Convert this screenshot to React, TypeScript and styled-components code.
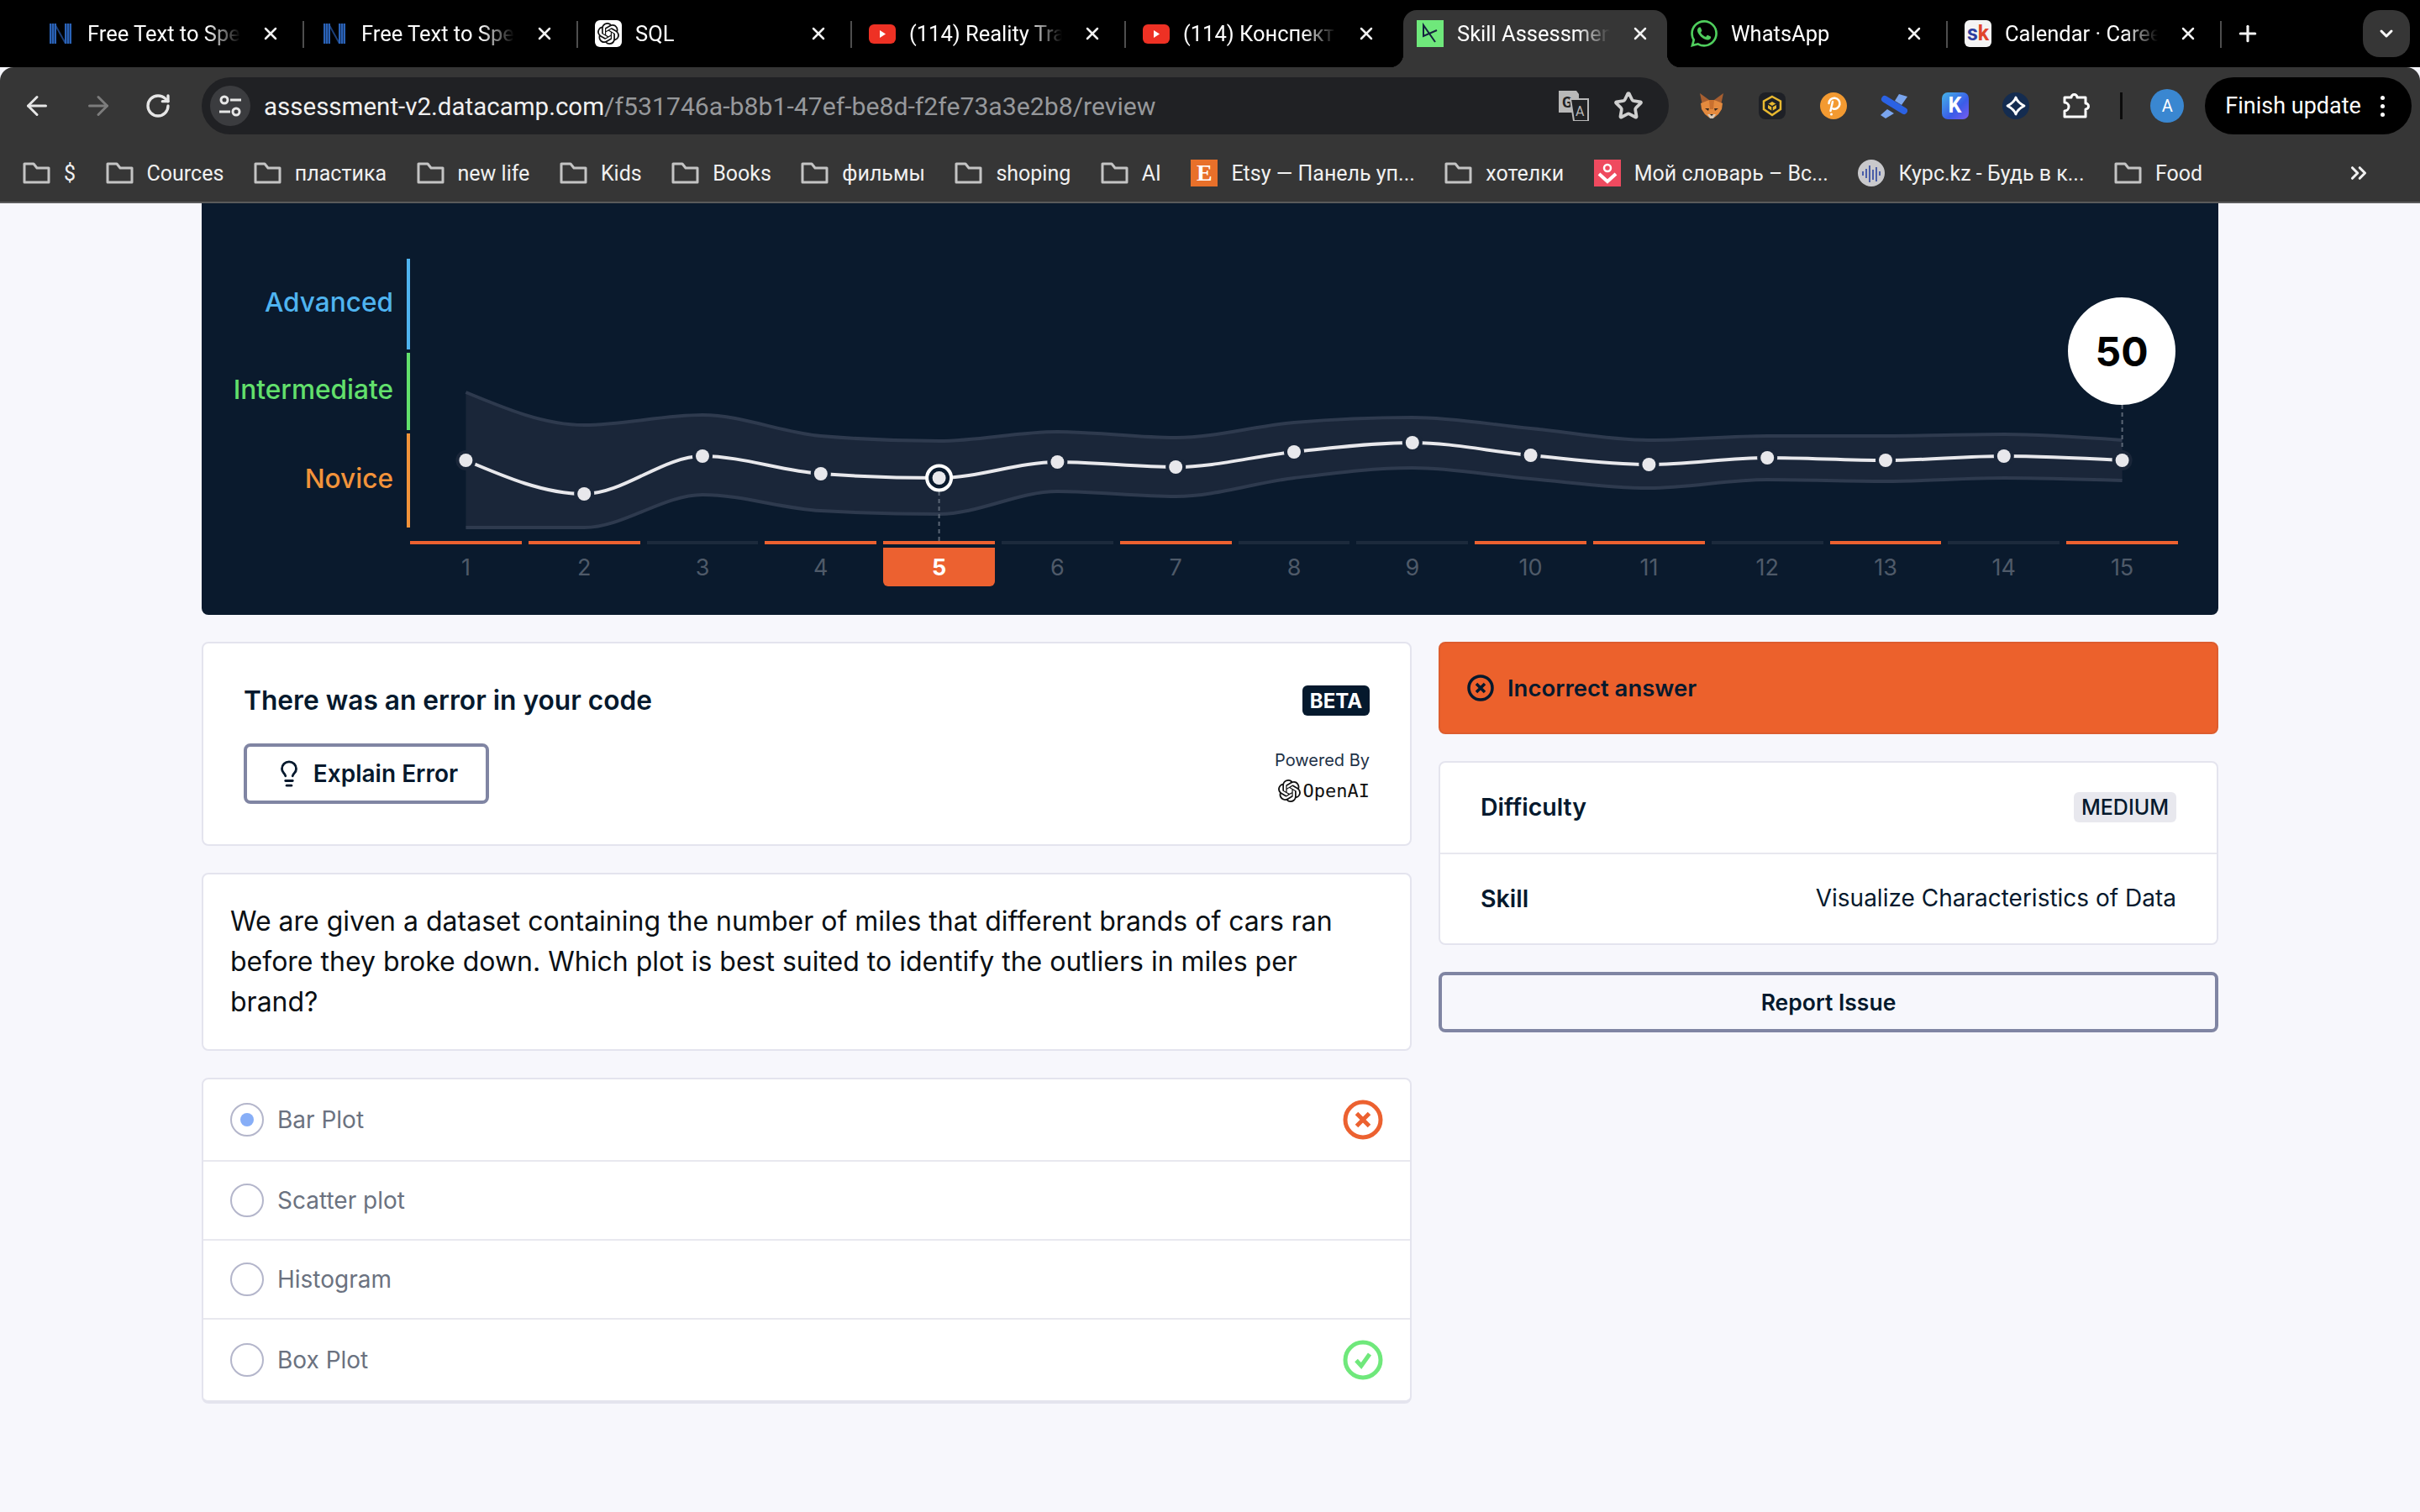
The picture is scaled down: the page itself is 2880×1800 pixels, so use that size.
import React from 'react'
import styled, { createGlobalStyle, css } from 'styled-components'
import { ArrowLeft, ArrowRight, ChevronDown, ChevronsRight, Lightbulb, Plus, RotateCw, Star, X } from 'lucide-react'
import { SiOpenai, SiWhatsapp } from 'react-icons/si'

const UI_FONT = `Roboto, "Liberation Sans", sans-serif`
const PAGE_FONT = `Inter, "Noto Sans", sans-serif`

const GlobalStyle = createGlobalStyle`
    html, body {
        margin: 0;
        padding: 0;
        background: #f7f7fc;
    }
    body {
        width: 2880px;
        height: 1800px;
        overflow: hidden;
        font-family: ${PAGE_FONT};
    }
    * {
        box-sizing: border-box;
    }
`

/* favicons + extension icons */

const NotionN = () => (
    <svg width="32" height="32" viewBox="0 0 32 32">
        <path d="M11 6l10 18v4L11 10z" fill="#1c3f78" />
        <path d="M3 4h8v24H3zM21 4h8v24h-8z" fill="#2a63b8" />
        <path d="M5.500 4v24M8.500 4v24M23.500 4v24M26.500 4v24" stroke="#16315f" strokeWidth="1" />
    </svg>
)

const ChatGptFav = () => (
    <GptBox>
        <SiOpenai size={26} color="#111" />
    </GptBox>
)

const YoutubeFav = () => (
    <svg width="32" height="32" viewBox="0 0 32 32">
        <rect x="0" y="5" width="32" height="23" rx="6" fill="#ee3124" />
        <path d="M13 12l7 4.500-7 4.500z" fill="#fff" />
    </svg>
)

const DatacampFav = () => (
    <svg width="32" height="32" viewBox="0 0 32 32">
        <rect width="32" height="32" fill="#6fe87b" />
        <path d="M22 26L8 6v13l16-7" fill="none" stroke="#14233f" strokeWidth="2" />
    </svg>
)

const WhatsappFav = () => <SiWhatsapp size={32} color="#4fce5d" />

const SkFav = () => (
    <SkBox>
        <SkS>s</SkS>k
    </SkBox>
)

const FolderIcon = () => (
    <svg width="33" height="26" viewBox="0 0 33 26" fill="none" stroke="#c4c4c4" strokeWidth="3">
        <path d="M2 2h11l4 5h14v17H2z" strokeLinejoin="round" />
    </svg>
)

const EtsyIcon = () => <EtsyBox>E</EtsyBox>

const DictIcon = () => (
    <svg width="32" height="32" viewBox="0 0 32 32">
        <rect width="32" height="32" fill="#ef4a5f" />
        <circle cx="16" cy="10" r="4" fill="none" stroke="#fff" strokeWidth="2.500" />
        <path d="M6 17l10 9 10-9" fill="none" stroke="#fff" strokeWidth="4" />
    </svg>
)

const KursIcon = () => (
    <svg width="32" height="32" viewBox="0 0 32 32">
        <circle cx="16" cy="16" r="16" fill="#c9c9cc" />
        <path d="M6 14v5M10 11v11M14 7v20M18 12v12M22 9v17M26 14v5" stroke="#4a5ea8" strokeWidth="2" />
    </svg>
)

const FoxIcon = () => (
    <svg width="32" height="32" viewBox="0 0 32 32">
        <path d="M2 1l11 8-8 6zM30 1L19 9l8 6z" fill="#a85f30" />
        <path d="M3 13l10-4h6l10 4-1 7-4 6-5 4h-6l-5-4-4-6z" fill="#e48a3e" />
        <path d="M13 9h6l-1 11h-4z" fill="#c9702f" />
        <path d="M8 19h5l-1 3zM24 19h-5l1 3z" fill="#3a2a20" />
        <path d="M11 26h10l-3 5h-4z" fill="#d8c7b5" />
        <path d="M14 26h4l-2 2z" fill="#222" />
    </svg>
)

const BeetleIcon = () => (
    <svg width="32" height="32" viewBox="0 0 32 32">
        <rect width="32" height="32" rx="8" fill="#1e2026" />
        <path d="M16 5l10 5.500V20l-10 7-10-7v-9.500z" fill="none" stroke="#e8b830" strokeWidth="2.500" />
        <path d="M16 11l5 3v5l-5 3-5-3v-5z" fill="#e8b830" />
        <path d="M11 14l5 3 5-3M16 17v5" stroke="#1e2026" strokeWidth="1.500" fill="none" />
    </svg>
)

const PolkaIcon = () => (
    <svg width="32" height="32" viewBox="0 0 32 32">
        <circle cx="16" cy="16" r="16" fill="#f39a31" />
        <path d="M10.500 13a6.500 6.500 0 1 1 5 6.500M15 11l-2.500 11" fill="none" stroke="#fff" strokeWidth="2.500" strokeLinecap="round" />
        <circle cx="13.500" cy="26" r="1.500" fill="#fff" />
    </svg>
)

const SatelliteIcon = () => (
    <svg width="32" height="32" viewBox="0 0 32 32">
        <path d="M22 2l10 3-7 10-8-5zM8 20l8 5-10 6-6-4z" fill="#7aa5ee" />
        <path d="M5 8l23 14" stroke="#2b62e3" strokeWidth="8" strokeLinecap="round" />
    </svg>
)

const KeplrIcon = () => <KeplrBox>K</KeplrBox>

const DiamondIcon = () => (
    <svg width="32" height="32" viewBox="0 0 32 32">
        <circle cx="16" cy="16" r="16" fill="#142c50" />
        <path d="M16 6q2 6 10 10q-8 4-10 10q-2-6-10-10q8-4 10-10z" fill="none" stroke="#fff" strokeWidth="2.800" strokeLinejoin="round" />
    </svg>
)

const PuzzleIcon = () => (
    <svg width="32" height="32" viewBox="0 0 32 32" fill="none" stroke="#fff" strokeWidth="3" strokeLinejoin="round">
        <path d="M2 6h8a3.500 3.500 0 0 1 7 0h10v7a3.500 3.500 0 0 1 0 7v9H2v-7a5 5 0 0 0 0-10z" />
    </svg>
)

const TranslateIcon = () => (
    <svg width="36" height="36" viewBox="0 0 36 36">
        <path d="M0 0h21l3 4v22H0z" fill="#b8b8b8" />
        <text x="4" y="20" fontSize="18" fontWeight="700" fontFamily="Roboto, sans-serif" fill="#202124">G</text>
        <path d="M14 10h21v26H18z" fill="#202124" stroke="#b8b8b8" strokeWidth="2" />
        <text x="20" y="30" fontSize="16" fontFamily="Roboto, sans-serif" fill="#b8b8b8">A</text>
    </svg>
)

const SiteInfoIcon = () => (
    <svg width="30" height="30" viewBox="0 0 30 30" fill="none" stroke="#e6e6e6" strokeWidth="3">
        <circle cx="8" cy="8" r="4" />
        <path d="M15 8h13M2 22h13" />
        <circle cx="22" cy="22" r="4" />
    </svg>
)

const StatusIcon = ({ kind }: { kind: 'wrong' | 'right' }) => (
    <svg width="48" height="48" viewBox="0 0 48 48" fill="none" stroke={kind === 'wrong' ? '#ec6130' : '#6fe87b'} strokeWidth="5">
        <circle cx="24" cy="24" r="21" />
        {kind === 'wrong' ? <path d="M16.500 16.500l15 15M31.500 16.500l-15 15" /> : <path d="M16 24.500l6 6.500 10-14" />}
    </svg>
)

const AlertIcon = () => (
    <svg width="32" height="32" viewBox="0 0 32 32" fill="none" stroke="#05192d" strokeWidth="3.500">
        <circle cx="16" cy="16" r="14" />
        <path d="M11 11l10 10M21 11L11 21" />
    </svg>
)

/* chart */

type Pt = [number, number]

const COL = 140.8
const FIRST_X = 66.4
const TOP = 308

const toPts = (ys: number[]): Pt[] => ys.map((y, i) => [FIRST_X + i * COL, y - TOP])

const scores = toPts([548, 588, 543, 564, 569, 550, 556, 538, 527, 542, 553, 545, 548, 543, 548])
const upper = toPts([467, 506, 494, 519, 525, 514, 521, 503, 497, 510, 524, 519, 519, 517, 524])
const lower = toPts([628, 628, 589, 608, 612, 585, 591, 569, 557, 570, 581, 571, 573, 569, 572])

// same maths as d3 curveMonotoneX
const monotone = (pts: Pt[], move = true) => {
    const n = pts.length
    const h: number[] = []
    const s: number[] = []
    for (let i = 0; i < n - 1; i++) {
        h.push(pts[i + 1][0] - pts[i][0])
        s.push((pts[i + 1][1] - pts[i][1]) / h[i])
    }
    const t: number[] = new Array(n).fill(0)
    for (let i = 1; i < n - 1; i++) {
        const p = (s[i - 1] * h[i] + s[i] * h[i - 1]) / (h[i - 1] + h[i])
        t[i] =
            (Math.sign(s[i - 1]) + Math.sign(s[i])) *
            Math.min(Math.abs(s[i - 1]), Math.abs(s[i]), 0.5 * Math.abs(p))
    }
    t[0] = (3 * s[0] - t[1]) / 2
    t[n - 1] = (3 * s[n - 2] - t[n - 2]) / 2
    let d = `${move ? 'M' : 'L'}${pts[0][0]} ${pts[0][1]}`
    for (let i = 0; i < n - 1; i++) {
        const k = h[i] / 3
        d += `C${pts[i][0] + k} ${pts[i][1] + t[i] * k} ${pts[i + 1][0] - k} ${pts[i + 1][1] - t[i + 1] * k} ${pts[i + 1][0]} ${pts[i + 1][1]}`
    }
    return d
}

const ScoreChart = () => (
    <svg width="2104" height="336" viewBox="0 0 2104 336">
        <path d={`${monotone(upper)}${monotone([...lower].reverse(), false)}Z`} fill="#1a2639" />
        <path d={monotone(upper)} fill="none" stroke="#2e3a4e" strokeWidth="4" />
        <path d={monotone(lower)} fill="none" stroke="#2e3a4e" strokeWidth="4" />
        <path d={monotone(scores)} fill="none" stroke="#e8e8ec" strokeWidth="4" />
        <path d={`M${scores[4][0]} 277V336`} stroke="#5b6675" strokeWidth="2" strokeDasharray="5 4" />
        <path d={`M${scores[14][0]} 174V240`} stroke="#5b6675" strokeWidth="2" strokeDasharray="5 4" />
        {scores.map(([x, y], i) => (
            <g key={i}>
                <circle cx={x} cy={y} r="12" fill="#1a2639" />
                {i === 4 && <circle cx={x} cy={y} r="14.500" fill="#0a1a2d" stroke="#fff" strokeWidth="4" />}
                <circle cx={x} cy={y} r="8" fill="#e8e8ec" />
            </g>
        ))}
    </svg>
)

/* data */

const tabs = [
    { icon: <NotionN />, title: 'Free Text to Speech', sep: true },
    { icon: <NotionN />, title: 'Free Text to Speech', sep: true },
    { icon: <ChatGptFav />, title: 'SQL', sep: true },
    { icon: <YoutubeFav />, title: '(114) Reality Transurfing', sep: true },
    { icon: <YoutubeFav />, title: '(114) Конспект книги', sep: false },
    { icon: <DatacampFav />, title: 'Skill Assessment', active: true, sep: false },
    { icon: <WhatsappFav />, title: 'WhatsApp', sep: true },
    { icon: <SkFav />, title: 'Calendar · Career', sep: true },
]

const bookmarks = [
    { icon: <FolderIcon />, label: '$' },
    { icon: <FolderIcon />, label: 'Cources' },
    { icon: <FolderIcon />, label: 'пластика' },
    { icon: <FolderIcon />, label: 'new life' },
    { icon: <FolderIcon />, label: 'Kids' },
    { icon: <FolderIcon />, label: 'Books' },
    { icon: <FolderIcon />, label: 'фильмы' },
    { icon: <FolderIcon />, label: 'shoping' },
    { icon: <FolderIcon />, label: 'AI' },
    { icon: <EtsyIcon />, label: 'Etsy — Панель уп...' },
    { icon: <FolderIcon />, label: 'хотелки' },
    { icon: <DictIcon />, label: 'Мой словарь – Вс...' },
    { icon: <KursIcon />, label: 'Курс.kz - Будь в к...' },
    { icon: <FolderIcon />, label: 'Food' },
]

const extensions = [<FoxIcon />, <BeetleIcon />, <PolkaIcon />, <SatelliteIcon />, <KeplrIcon />, <DiamondIcon />, <PuzzleIcon />]

const levels = [
    { label: 'Advanced', color: '#4fb4f0', height: 108 },
    { label: 'Intermediate', color: '#62e06c', height: 92 },
    { label: 'Novice', color: '#f2933a', height: 112 },
]

const answered = [true, true, false, true, true, false, true, false, false, true, true, false, true, false, true]

const App = () => (
    <>
        <GlobalStyle />
        <TabStrip>
            {tabs.map((t, i) => (
                <Tab key={i} $active={t.active} $sep={t.sep}>
                    <FavSlot>{t.icon}</FavSlot>
                    <TabTitle>{t.title}</TabTitle>
                    <CloseBtn>
                        <X size={24} strokeWidth={2.5} />
                    </CloseBtn>
                </Tab>
            ))}
            <NewTab>
                <Plus size={30} strokeWidth={2.5} />
            </NewTab>
            <TabMenu>
                <ChevronDown size={24} strokeWidth={3} />
            </TabMenu>
        </TabStrip>

        <Toolbar>
            <NavBtns>
                <ArrowLeft size={36} color="#e6e6e6" strokeWidth={2} />
                <ArrowRight size={36} color="#7c7c7c" strokeWidth={2} />
                <RotateCw size={32} color="#e6e6e6" strokeWidth={2.5} />
            </NavBtns>
            <AddressBar>
                <SiteInfo>
                    <SiteInfoIcon />
                </SiteInfo>
                <Url>
                    assessment-v2.datacamp.com<UrlRest>/f531746a-b8b1-47ef-be8d-f2fe73a3e2b8/review</UrlRest>
                </Url>
                <AddressActions>
                    <TranslateIcon />
                    <Star size={36} color="#d0d0d0" strokeWidth={2.5} />
                </AddressActions>
            </AddressBar>
            <Extensions>
                {extensions.map((e, i) => (
                    <React.Fragment key={i}>{e}</React.Fragment>
                ))}
            </Extensions>
            <ToolbarSep />
            <Avatar>A</Avatar>
            <FinishPill>
                Finish update
                <Dots>
                    <i />
                    <i />
                    <i />
                </Dots>
            </FinishPill>
        </Toolbar>

        <BookmarksBar>
            {bookmarks.map((b, i) => (
                <Bookmark key={i}>
                    {b.icon}
                    <span>{b.label}</span>
                </Bookmark>
            ))}
            <MoreBookmarks>
                <ChevronsRight size={30} strokeWidth={2.5} />
            </MoreBookmarks>
        </BookmarksBar>

        <Page>
            <ChartPanel>
                <ChartRow>
                    <Levels>
                        {levels.map((l) => (
                            <Level key={l.label} $color={l.color} $height={l.height}>
                                {l.label}
                            </Level>
                        ))}
                    </Levels>
                    <Plot>
                        <ScoreChart />
                        <ScoreBubble>50</ScoreBubble>
                    </Plot>
                </ChartRow>
                <Ticks>
                    {answered.map((ok, i) => (
                        <Tick key={i}>
                            <TickBar $ok={ok} />
                            <TickNum $active={i === 4}>{i + 1}</TickNum>
                        </Tick>
                    ))}
                </Ticks>
            </ChartPanel>

            <Columns>
                <LeftCol>
                    <ErrorCard>
                        <ErrorMain>
                            <ErrorTitle>There was an error in your code</ErrorTitle>
                            <OutlineBtn $inline>
                                <Lightbulb size={34} strokeWidth={2} />
                                Explain Error
                            </OutlineBtn>
                        </ErrorMain>
                        <ErrorSide>
                            <Beta>BETA</Beta>
                            <PoweredBy>
                                <span>Powered By</span>
                                <OpenAiMark>
                                    <SiOpenai size={27} color="#111" />
                                    OpenAI
                                </OpenAiMark>
                            </PoweredBy>
                        </ErrorSide>
                    </ErrorCard>

                    <QuestionCard>
                        We are given a dataset containing the number of miles that different brands of cars ran
                        before they broke down. Which plot is best suited to identify the outliers in miles per
                        brand?
                    </QuestionCard>

                    <OptionsCard>
                        <Option>
                            <Radio $checked />
                            <OptionLabel>Bar Plot</OptionLabel>
                            <StatusIcon kind="wrong" />
                        </Option>
                        <Option>
                            <Radio />
                            <OptionLabel>Scatter plot</OptionLabel>
                        </Option>
                        <Option>
                            <Radio />
                            <OptionLabel>Histogram</OptionLabel>
                        </Option>
                        <Option>
                            <Radio />
                            <OptionLabel>Box Plot</OptionLabel>
                            <StatusIcon kind="right" />
                        </Option>
                    </OptionsCard>
                </LeftCol>

                <RightCol>
                    <AlertBar>
                        <AlertIcon />
                        Incorrect answer
                    </AlertBar>
                    <InfoCard>
                        <InfoRow>
                            <InfoLabel>Difficulty</InfoLabel>
                            <Medium>MEDIUM</Medium>
                        </InfoRow>
                        <InfoRow>
                            <InfoLabel>Skill</InfoLabel>
                            <InfoValue>Visualize Characteristics of Data</InfoValue>
                        </InfoRow>
                    </InfoCard>
                    <OutlineBtn>Report Issue</OutlineBtn>
                </RightCol>
            </Columns>
        </Page>
    </>
)

export default App

/* browser chrome */

const TabStrip = styled.div`
    display: flex;
    height: 80px;
    padding: 12px 12px 0 36px;
    background: #000;
    font-family: ${UI_FONT};
    color: #fff;
`

const Tab = styled.div<{ $active?: boolean; $sep?: boolean }>`
    position: relative;
    flex: 0 0 326px;
    min-width: 0;
    width: 326px;
    display: flex;
    align-items: center;
    padding: 0 28px 12px 20px;

    ${({ $sep }) =>
        $sep &&
        css`
            &::after {
                content: '';
                position: absolute;
                right: 0;
                top: 13px;
                width: 2px;
                height: 32px;
                background: #4e4e4e;
            }
        `}

    ${({ $active }) =>
        $active &&
        css`
            &::before {
                content: '';
                position: absolute;
                left: 4px;
                right: 8px;
                top: 0;
                bottom: 0;
                background: #363636;
                border-radius: 16px 16px 0 0;
            }
            &::after {
                content: '';
                position: absolute;
                left: -12px;
                right: -8px;
                bottom: 0;
                height: 16px;
                background:
                    radial-gradient(circle at 0 0, transparent 16px, #363636 16.5px) left / 16px 16px no-repeat,
                    radial-gradient(circle at 100% 0, transparent 16px, #363636 16.5px) right / 16px 16px no-repeat;
            }
        `}
`

const FavSlot = styled.div`
    position: relative;
    z-index: 1;
    flex: 0 0 32px;
    height: 32px;
    display: flex;
    align-items: center;
    justify-content: center;
`

const TabTitle = styled.div`
    position: relative;
    z-index: 1;
    flex: 1;
    min-width: 0;
    margin-left: 16px;
    font-size: 25.5px;
    white-space: nowrap;
    overflow: hidden;
    mask-image: linear-gradient(to right, #000 78%, transparent);
`

const CloseBtn = styled.div`
    position: relative;
    z-index: 1;
    flex: 0 0 24px;
    margin-left: 24px;
    display: flex;
    color: #f2f2f2;
`

const NewTab = styled.div`
    margin: 0 0 12px 16px;
    display: flex;
    align-items: center;
    color: #f2f2f2;
`

const TabMenu = styled.div`
    margin-left: auto;
    width: 56px;
    height: 56px;
    border-radius: 20px;
    background: #363636;
    display: flex;
    align-items: center;
    justify-content: center;
`

const GptBox = styled.div`
    width: 32px;
    height: 32px;
    border-radius: 6px;
    background: #fff;
    display: flex;
    align-items: center;
    justify-content: center;
`

const SkBox = styled.div`
    width: 32px;
    height: 32px;
    border-radius: 6px;
    background: #f4f4f4;
    color: #e0452c;
    font-size: 25px;
    font-weight: 700;
    text-align: center;
    line-height: 31px;
`

const SkS = styled.span`
    color: #2f3f9e;
`

const EtsyBox = styled.div`
    width: 32px;
    height: 32px;
    background: #e8702a;
    color: #fff;
    font-family: 'Liberation Serif', serif;
    font-size: 28px;
    font-weight: 700;
    text-align: center;
    line-height: 32px;
`

const KeplrBox = styled.div`
    width: 32px;
    height: 32px;
    border-radius: 7px;
    background: linear-gradient(to bottom right, #45b4e8, #3a5ce8 60%, #7a5cf0);
    color: #fff;
    font-size: 25px;
    font-weight: 700;
    text-align: center;
    line-height: 32px;
`

const Toolbar = styled.div`
    display: flex;
    align-items: center;
    height: 80px;
    padding-top: 12px;
    background: #363636;
    border-radius: 16px 16px 0 0;
    font-family: ${UI_FONT};
`

const NavBtns = styled.div`
    flex: 0 0 240px;
    display: flex;
    align-items: center;
    gap: 37px;
    padding-left: 26px;
`

const AddressBar = styled.div`
    flex: 0 0 1746px;
    height: 68px;
    display: flex;
    align-items: center;
    padding: 0 30px 0 10px;
    border-radius: 34px;
    background: #202124;
`

const SiteInfo = styled.div`
    width: 48px;
    height: 48px;
    border-radius: 50%;
    background: #3b3c3f;
    display: flex;
    align-items: center;
    justify-content: center;
`

const Url = styled.div`
    margin-left: 16px;
    font-size: 29.5px;
    color: #f0f0f0;
    white-space: nowrap;
`

const UrlRest = styled.span`
    color: #96989b;
    font-size: 30.2px;
`

const AddressActions = styled.div`
    margin-left: auto;
    display: flex;
    align-items: center;
    gap: 29px;
`

const Extensions = styled.div`
    display: flex;
    align-items: center;
    gap: 40.4px;
    margin-left: 35px;
`

const ToolbarSep = styled.div`
    width: 3px;
    height: 32px;
    margin-left: 36px;
    background: #0c0c0c;
`

const Avatar = styled.div`
    width: 40px;
    height: 40px;
    margin-left: 33px;
    border-radius: 50%;
    background: #3a87d1;
    color: #fff;
    font-size: 20px;
    text-align: center;
    line-height: 40px;
`

const FinishPill = styled.div`
    width: 246px;
    height: 68px;
    margin-left: 25px;
    padding-left: 24px;
    border-radius: 34px;
    background: #000;
    color: #fff;
    font-size: 27px;
    display: flex;
    align-items: center;
    white-space: nowrap;
`

const Dots = styled.div`
    margin-left: 23px;
    display: flex;
    flex-direction: column;
    gap: 5px;
    i {
        width: 5px;
        height: 5px;
        border-radius: 50%;
        background: #fff;
    }
`

const BookmarksBar = styled.div`
    display: flex;
    align-items: center;
    gap: 35.5px;
    height: 82px;
    padding: 12px 0 0 27px;
    background: #363636;
    border-bottom: 2px solid #5a5a5a;
    font-family: ${UI_FONT};
    color: #f0f0f0;
    font-size: 25px;
`

const Bookmark = styled.div`
    display: flex;
    align-items: center;
    gap: 16px;
    white-space: nowrap;
`

const MoreBookmarks = styled.div`
    margin-left: auto;
    margin-right: 58px;
    display: flex;
`

/* page */

const Page = styled.div`
    width: 2400px;
    margin: 0 auto;
    display: flex;
    flex-direction: column;
    gap: 32px;
`

const ChartPanel = styled.div`
    height: 490px;
    padding: 66px 48px 0 0;
    background: #0a1a2d;
    border-radius: 0 0 8px 8px;
`

const ChartRow = styled.div`
    display: flex;
    height: 336px;
`

const Levels = styled.div`
    flex: 0 0 248px;
    display: flex;
    flex-direction: column;
    gap: 4px;
`

const Level = styled.div<{ $color: string; $height: number }>`
    height: ${({ $height }) => $height}px;
    display: flex;
    align-items: center;
    justify-content: flex-end;
    padding: 0 16px 6px 0;
    border-right: 4px solid ${({ $color }) => $color};
    color: ${({ $color }) => $color};
    font-size: 31.6px;
    font-weight: 500;
`

const Plot = styled.div`
    position: relative;
    flex: 1;
`

const ScoreBubble = styled.div`
    position: absolute;
    left: 1973px;
    top: 46px;
    width: 128px;
    height: 128px;
    border-radius: 50%;
    background: #fff;
    color: #000;
    font-size: 48px;
    font-weight: 700;
    display: flex;
    align-items: center;
    justify-content: center;
`

const Ticks = styled.div`
    display: grid;
    grid-template-columns: repeat(15, 1fr);
    gap: 8px;
    margin-left: 248px;
`

const Tick = styled.div`
    display: flex;
    flex-direction: column;
    gap: 4px;
`

const TickBar = styled.div<{ $ok: boolean }>`
    height: 4px;
    background: ${({ $ok }) => ($ok ? '#ec6130' : '#1c2a3c')};
`

const TickNum = styled.div<{ $active: boolean }>`
    height: 46px;
    display: flex;
    align-items: center;
    justify-content: center;
    font-size: 27px;
    border-radius: 0 0 6px 6px;
    color: ${({ $active }) => ($active ? '#fff' : '#4f5a69')};
    font-weight: ${({ $active }) => ($active ? 700 : 400)};
    background: ${({ $active }) => ($active ? '#ec6130' : 'transparent')};
`

const Columns = styled.div`
    display: grid;
    grid-template-columns: 1440px 928px;
    gap: 32px;
    align-items: start;
`

const LeftCol = styled.div`
    display: flex;
    flex-direction: column;
    gap: 32px;
`

const RightCol = styled(LeftCol)``

const Card = styled.div`
    background: #fff;
    border: 2px solid #e4e4ee;
    border-radius: 8px;
    color: #05192d;
`

const ErrorCard = styled(Card)`
    height: 243px;
    display: flex;
    justify-content: space-between;
    padding: 50px 48px 0;
`

const ErrorMain = styled.div`
    display: flex;
    flex-direction: column;
    align-items: flex-start;
    gap: 31px;
`

const ErrorTitle = styled.div`
    font-size: 31.7px;
    font-weight: 600;
    line-height: 40px;
    margin-top: -2px;
`

const ErrorSide = styled.div`
    display: flex;
    flex-direction: column;
    align-items: flex-end;
    gap: 41px;
`

const Beta = styled.div`
    height: 36px;
    width: 80px;
    border-radius: 6px;
    background: #05192d;
    color: #fff;
    font-size: 24px;
    font-weight: 700;
    display: flex;
    align-items: center;
    justify-content: center;
`

const PoweredBy = styled.div`
    display: flex;
    flex-direction: column;
    align-items: flex-end;
    gap: 11px;
    font-size: 20px;
    color: #213147;
`

const OpenAiMark = styled.div`
    display: flex;
    align-items: center;
    gap: 3px;
    font-family: 'DejaVu Sans Mono', monospace;
    font-size: 22px;
    color: #111;
`

const OutlineBtn = styled.div<{ $inline?: boolean }>`
    height: 72px;
    display: flex;
    align-items: center;
    justify-content: center;
    gap: 12px;
    width: ${({ $inline }) => ($inline ? '292px' : '100%')};
    border: 4px solid #8085a3;
    border-radius: 8px;
    font-size: ${({ $inline }) => ($inline ? '28px' : '26.5px')};
    font-weight: 600;
    color: #05192d;
`

const QuestionCard = styled(Card)`
    padding: 32px 60px 32px 32px;
    font-size: 32px;
    line-height: 48px;
    color: #0a0f14;
    font-weight: 400;
`

const OptionsCard = styled(Card)`
    border-bottom-width: 4px;
    display: flex;
    flex-direction: column;
`

const Option = styled.div`
    display: flex;
    align-items: center;
    gap: 16px;
    padding: 24px 32px;
    & + & {
        border-top: 2px solid #e8e8ef;
    }
`

const Radio = styled.div<{ $checked?: boolean }>`
    width: 40px;
    height: 40px;
    border-radius: 50%;
    border: 2px solid #b4b6cb;
    display: flex;
    align-items: center;
    justify-content: center;

    ${({ $checked }) =>
        $checked &&
        css`
            &::before {
                content: '';
                width: 16px;
                height: 16px;
                border-radius: 50%;
                background: #87aef7;
            }
        `}
`

const OptionLabel = styled.div`
    flex: 1;
    font-size: 28px;
    line-height: 44px;
    color: #6b7280;
`

const AlertBar = styled.div`
    height: 110px;
    display: flex;
    align-items: center;
    gap: 16px;
    padding-left: 32px;
    background: #ec612c;
    border: 2px solid #dd5d2e;
    border-radius: 8px;
    color: #05192d;
    font-size: 27.5px;
    font-weight: 600;
`

const InfoCard = styled(Card)`
    display: flex;
    flex-direction: column;
`

const InfoRow = styled.div`
    height: 107px;
    display: flex;
    align-items: center;
    justify-content: space-between;
    padding: 0 48px 2px;
    & + & {
        border-top: 2px solid #e8e8ef;
        height: 108px;
    }
`

const InfoLabel = styled.div`
    font-size: 28.5px;
    font-weight: 600;
`

const InfoValue = styled.div`
    font-size: 28px;
`

const Medium = styled.div`
    width: 122px;
    height: 36px;
    border-radius: 6px;
    background: #e8e8ee;
    font-size: 25px;
    font-weight: 500;
    display: flex;
    align-items: center;
    justify-content: center;
`
